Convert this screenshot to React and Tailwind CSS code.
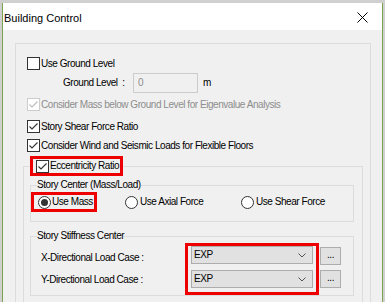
import React from "react";

const F = { fontFamily: '"Liberation Sans", Arial, sans-serif' };

function Check({ checked, disabled }) {
  const c = disabled ? "#bcbcbc" : "#333333";
  return (
    <span
      className={`inline-flex h-[13px] w-[13px] shrink-0 items-center justify-center border bg-white ${disabled ? "border-[#cccccc]" : "border-[#333333]"}`}
    >
      {checked && (
        <svg width="11" height="11" viewBox="0 0 11 11">
          <path d="M1.5 5.5 L4 8 L9.5 2.5" fill="none" stroke={c} strokeWidth="1.1" />
        </svg>
      )}
    </span>
  );
}

function Radio({ checked }) {
  return (
    <span className="inline-flex h-[13px] w-[13px] shrink-0 items-center justify-center rounded-full border border-[#333333] bg-white">
      {checked && <span className="h-[7px] w-[7px] rounded-full bg-[#333333]" />}
    </span>
  );
}

function Select() {
  return (
    <div className="flex h-[18px] w-[122px] items-center justify-between border border-[#adadad] bg-[#e1e1e1] pl-[2px] pr-[6px]">
      <span className="leading-none text-black">EXP</span>
      <svg width="8" height="5" viewBox="0 0 8 5">
        <path d="M0.5 0.5 L4 4 L7.5 0.5" fill="none" stroke="#555" strokeWidth="1" />
      </svg>
    </div>
  );
}

function Dots() {
  return (
    <div className="flex h-[18px] w-[21px] items-end justify-center border border-[#adadad] bg-[#e1e1e1] pb-[4px]">
      <span className="text-[10px] leading-none tracking-[-0.5px] text-black">...</span>
    </div>
  );
}

export default function App() {
  return (
    <div className="h-[302px] w-[385px] overflow-hidden bg-[#d0d0d0] pl-[2px] pr-[2px] pt-[3px]" style={F}>
      <div className="flex h-[299px] flex-col border-l border-r border-[#7aa34f] bg-[#f0f0f0]">
        <div className="flex h-[27px] shrink-0 items-center justify-between bg-white pl-[1px] pr-[14px] pt-[2px]">
          <span className="text-[11px] leading-[14px] text-black">Building Control</span>
          <svg width="11" height="11" viewBox="0 0 11 11">
            <path d="M0.5 0.5 L10.5 10.5 M10.5 0.5 L0.5 10.5" stroke="#000" strokeWidth="1" />
          </svg>
        </div>
        <div className="flex-1 pl-[12px] pt-[13px] text-[10px] leading-[14px] tracking-[-0.45px] text-black">
          <div className="h-[300px] w-[356px] border border-[#dcdcdc] pl-[11px] pt-[13px]">
            <div className="flex h-[13px] items-center gap-[1px]">
              <Check />
              <span>Use Ground Level</span>
            </div>
            <div className="mt-[3px] flex h-[20px] items-center">
              <span className="ml-[36px] w-[70px] whitespace-nowrap">Ground Level&nbsp;&nbsp;:</span>
              <div className="flex h-[20px] w-[65px] items-center border border-[#cccccc] bg-[#f0f0f0] pl-[4px] text-[#8d8d8d]">
                0
              </div>
              <span className="ml-[5px]">m</span>
            </div>
            <div className="mt-[5px] flex h-[13px] items-center gap-[1px] text-[#8d8d8d]">
              <Check checked disabled />
              <span className="whitespace-nowrap">Consider Mass below Ground Level for Eigenvalue Analysis</span>
            </div>
            <div className="mt-[9px] flex h-[13px] items-center gap-[1px]">
              <Check checked />
              <span>Story Shear Force Ratio</span>
            </div>
            <div className="mt-[6px] flex h-[13px] items-center gap-[1px]">
              <Check checked />
              <span className="whitespace-nowrap">Consider Wind and Seismic Loads for Flexible Floors</span>
            </div>
            <fieldset className="ml-[-4px] mt-[4px] h-[200px] w-[340px] border border-[#dcdcdc]">
              <legend className="ml-[6px]">
                <span className="flex h-[20px] w-[93px] items-center gap-[1px] border-[3px] border-[#ee0000] pl-[3px]">
                  <Check checked />
                  <span className="whitespace-nowrap">Eccentricity Ratio</span>
                </span>
              </legend>
              <fieldset className="ml-[6px] mt-[2px] w-[324px] border border-[#dcdcdc] pb-[9px]">
                <legend className="ml-[6px] whitespace-nowrap leading-[14px]">Story Center (Mass/Load)</legend>
                <div className="flex items-center whitespace-nowrap">
                  <span className="flex h-[20px] w-[66px] items-center gap-[1px] border-[3px] border-[#ee0000] pl-[4px]">
                    <Radio checked />
                    <span>Use Mass</span>
                  </span>
                  <span className="ml-[28px] flex w-[116px] items-center gap-[2px]">
                    <Radio />
                    <span>Use Axial Force</span>
                  </span>
                  <span className="flex items-center gap-[2px]">
                    <Radio />
                    <span>Use Shear Force</span>
                  </span>
                </div>
              </fieldset>
              <fieldset className="ml-[6px] mt-[7px] h-[67px] w-[324px] border border-[#dcdcdc]">
                <legend className="ml-[6px] whitespace-nowrap leading-[14px]">Story Stiffness Center</legend>
                <div className="flex whitespace-nowrap">
                  <div className="flex w-[154px] flex-col pl-[10px] pt-[8px]">
                    <span className="h-[22px]">X-Directional Load Case :</span>
                    <span className="h-[22px]">Y-Directional Load Case :</span>
                  </div>
                  <div className="flex flex-col gap-[6px] border-[3px] border-[#ee0000] px-[3px]">
                    <Select />
                    <Select />
                  </div>
                  <div className="ml-[1px] flex flex-col gap-[5px] pt-[4px]">
                    <Dots />
                    <Dots />
                  </div>
                </div>
              </fieldset>
            </fieldset>
          </div>
        </div>
      </div>
    </div>
  );
}
